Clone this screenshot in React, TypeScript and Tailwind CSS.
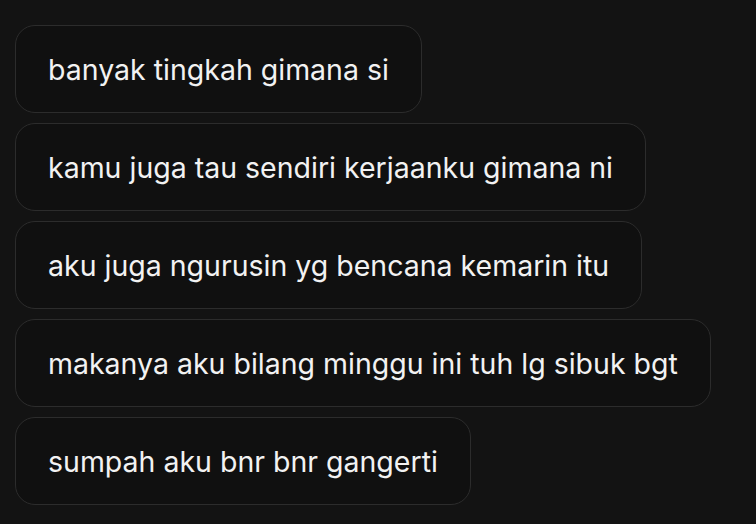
import React from "react";

const msgs = [
  "banyak tingkah gimana si",
  "kamu juga tau sendiri kerjaanku gimana ni",
  "aku juga ngurusin yg bencana kemarin itu",
  "makanya aku bilang minggu ini tuh lg sibuk bgt",
  "sumpah aku bnr bnr gangerti",
];

export default function App() {
  return (
    <div className="w-[756px] h-[524px] bg-[#131313] overflow-hidden pt-[25px] pl-[15px] flex flex-col gap-[10px]" style={{ fontFamily: "Inter, 'Noto Sans', sans-serif" }}>
      {msgs.map((m) => (
        <div key={m} className="w-fit h-[88px] flex items-center pt-[2px] px-[32px] rounded-[20px] border border-[#2c2c2c] bg-[#101010] text-[#f2f2f2] text-[28.5px] whitespace-nowrap">
          {m}
        </div>
      ))}
    </div>
  );
}
